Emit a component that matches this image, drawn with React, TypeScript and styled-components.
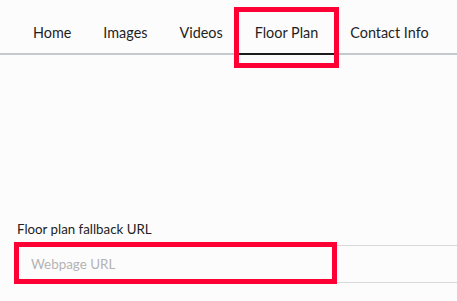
import React from "react";
import styled, { createGlobalStyle } from "styled-components";

const Global = createGlobalStyle`
  html, body { margin: 0; padding: 0; background: #fdfcfd; }
  body { font-family: "Lato", "Open Sans", sans-serif; color: #222; overflow: hidden; }
  *, *::before, *::after { box-sizing: border-box; }
`;

const Page = styled.div`
  width: 457px;
  height: 301px;
  background: #fdfcfd;
  display: flex;
  flex-direction: column;
`;

const TabBar = styled.nav`
  display: flex;
  padding-left: 17px;
  border-bottom: 2px solid #c3c9cd;
  height: 55px;
`;

const Tab = styled.div<{ $active?: boolean; $highlight?: boolean }>`
  position: relative;
  padding: 23px 16px 0;
  font-size: 14.4px;
  line-height: 20px;
  color: #1f1f1f;
  white-space: nowrap;
  margin-bottom: -2px;
  border-bottom: 2px solid ${(p) => (p.$active ? "#1c1c1c" : "transparent")};
  &::after {
    content: "";
    display: ${(p) => (p.$highlight ? "block" : "none")};
    position: absolute;
    left: -5px;
    right: -5px;
    top: 7px;
    height: 61px;
    border: 5px solid #fe0034;
  }
`;

const Content = styled.div`
  padding: 165px 0 0 17px;
  display: flex;
  flex-direction: column;
`;

const Label = styled.label`
  font-size: 13.3px;
  line-height: 18px;
  color: #222;
  margin-bottom: 7px;
`;

const InputWrap = styled.div`
  position: relative;
  &::after {
    content: "";
    position: absolute;
    left: -3px;
    top: -3px;
    width: 323px;
    height: 42px;
    border: 5px solid #fe0034;
    pointer-events: none;
  }
`;

const Input = styled.input`
  width: 100%;
  height: 38px;
  border: 1px solid #d9d9d9;
  border-right: none;
  background: #fdfcfd;
  padding: 0 0 0 13px;
  font-family: "Lato", "Open Sans", sans-serif;
  font-size: 13.4px;
  color: #222;
  outline: none;
  &::placeholder { color: #b3b3b3; }
`;

const tabs = ["Home", "Images", "Videos", "Floor Plan", "Contact Info"];

export default function App() {
  return (
    <>
      <Global />
      <Page>
        <TabBar>
          {tabs.map((t) => (
            <Tab key={t} $active={t === "Floor Plan"} $highlight={t === "Floor Plan"}>
              {t}
            </Tab>
          ))}
        </TabBar>
        <Content>
          <Label>Floor plan fallback URL</Label>
          <InputWrap>
            <Input placeholder="Webpage URL" />
          </InputWrap>
        </Content>
      </Page>
    </>
  );
}
